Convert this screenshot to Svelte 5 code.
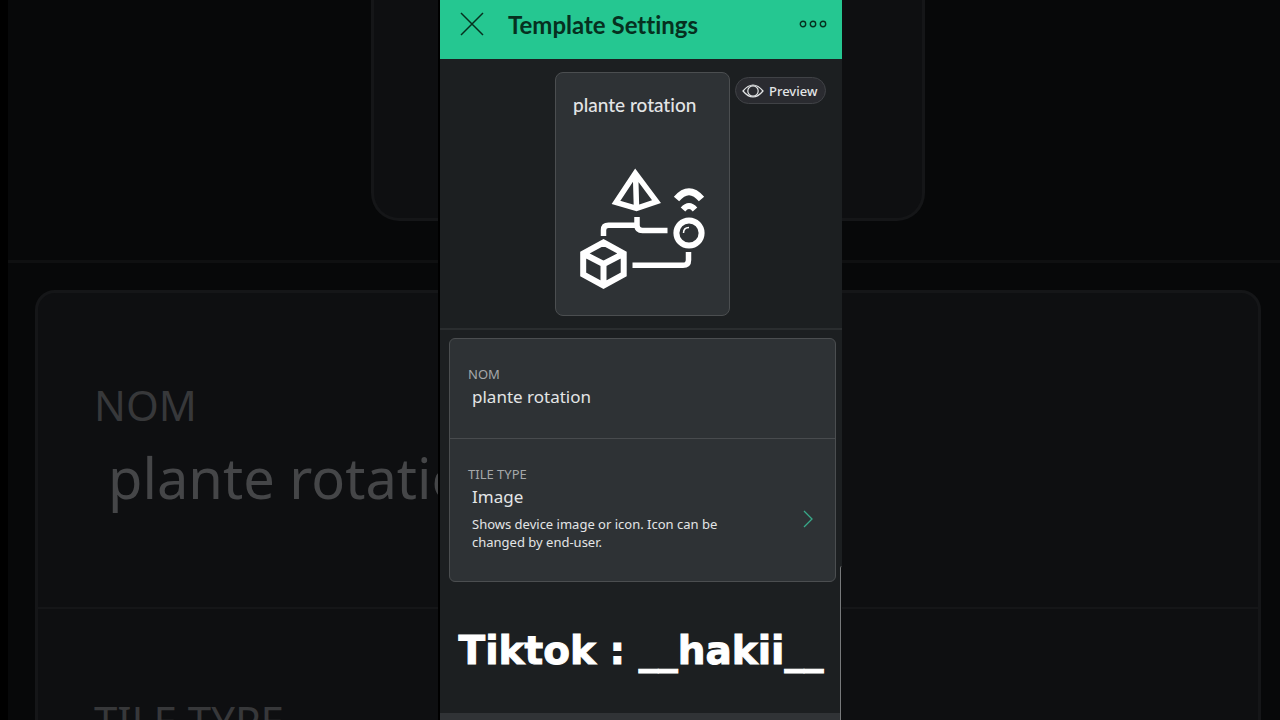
<script>
  let name = "plante rotation";

  const nameLabel = "NOM";
  const tileTypeLabel = "TILE TYPE";
  const tileType = "Image";
  const tileTypeHint =
    "Shows device image or icon. Icon can be changed by end-user.";
  const caption = "Tiktok : __hakii__";
</script>

<style>
  :global(body) {
    background: #000;
  }

  .stage {
    display: grid;
    min-height: 100vh;
    overflow: hidden;
    font-family: "Noto Sans", "Open Sans", sans-serif;
  }

  .backdrop,
  .phone {
    grid-area: 1 / 1;
    box-sizing: border-box;
  }

  /* enlarged, dimmed copy of the settings behind the phone */
  .backdrop {
    height: 100vh;
    overflow: hidden;
    border-left: 8px solid #000;
    background: #070809;
  }

  .backdrop-top {
    display: flex;
    justify-content: center;
    height: 260px;
    padding: 0 19px 0 27px;
    border-bottom: 3px solid #0f1011;
  }

  .backdrop-tile {
    box-sizing: border-box;
    width: 554px;
    height: 221px;
    border: 3px solid #151618;
    border-top: none;
    border-radius: 0 0 28px 28px;
    background: #0e0f11;
  }

  .backdrop-card {
    margin: 27px 19px 0 27px;
    border: 3px solid #151618;
    border-radius: 20px;
    background: #0e0f11;
  }

  .backdrop-row {
    box-sizing: border-box;
    height: 316px;
    padding: 80px 56px 0;
    border-bottom: 2px solid #151618;
  }

  .backdrop-label {
    color: #37383a;
    font-size: 42px;
    line-height: 64px;
  }

  .backdrop-value {
    padding-left: 14px;
    color: #454648;
    font-size: 56px;
    line-height: 80px;
  }

  .phone {
    position: relative;
    justify-self: center;
    display: flex;
    flex-direction: column;
    width: 100%;
    max-width: 404px;
    border-left: 2px solid #000;
    background: #1c1f21;
    color: #e3e5e6;
  }

  button {
    border: none;
    padding: 0;
    background: none;
    color: inherit;
    font: inherit;
    text-align: left;
    cursor: pointer;
  }

  svg {
    display: block;
    fill: none;
  }

  .header {
    display: flex;
    align-items: center;
    box-sizing: border-box;
    height: 59px;
    padding: 0 15px 12px 20px;
    background: #25c791;
    color: #06301f;
  }

  .title {
    flex: 1;
    margin: 2px 0 0 24px;
    font-family: Lato, sans-serif;
    font-size: 24px;
    font-weight: 700;
    font-variant-ligatures: none;
    line-height: 32px;
  }

  .preview-area {
    display: grid;
    grid-template-columns: 1fr 175px 1fr;
    padding: 13px 0 12px 3px;
    border-bottom: 2px solid #2a2d2f;
  }

  .tile {
    grid-column: 2;
    box-sizing: border-box;
    height: 244px;
    padding: 20px 17px;
    border: 1px solid #4b4e50;
    border-radius: 8px;
    background: #2e3235;
  }

  .tile-name {
    font-family: Lato, sans-serif;
    font-size: 19px;
    font-weight: 500;
    font-variant-ligatures: none;
    line-height: 24px;
    white-space: nowrap;
  }

  .tile svg {
    margin: 48px 0 0 4px;
  }

  .preview {
    display: flex;
    align-items: center;
    justify-self: start;
    gap: 5px;
    box-sizing: border-box;
    height: 27px;
    margin: 5px 0 0 5px;
    padding: 0 8px 0 6px;
    border: 1px solid #404246;
    border-radius: 14px;
    background: #2a2b30;
    font-size: 13px;
    font-weight: 500;
  }

  .card {
    margin: 8px 6px 0 9px;
    border: 1px solid #4b4e50;
    border-radius: 6px;
    background: #2e3235;
  }

  .row {
    display: block;
    box-sizing: border-box;
    width: 100%;
    padding: 25px 18px;
  }

  .name-row {
    height: 100px;
    border-bottom: 1px solid #484b4e;
  }

  .type-row {
    display: flex;
    align-items: flex-start;
    justify-content: space-between;
    height: 142px;
    padding-right: 22px;
  }

  .type-row svg {
    margin-top: 46px;
  }

  .label,
  .value,
  .hint {
    display: block;
  }

  .label {
    color: #a5a8aa;
    font-size: 13px;
    line-height: 20px;
  }

  .value {
    box-sizing: border-box;
    width: 100%;
    border: none;
    outline: none;
    padding: 0 0 0 4px;
    background: none;
    color: inherit;
    font-family: inherit;
    font-size: 17px;
    line-height: 26px;
  }

  .hint {
    max-width: 260px;
    padding: 5px 0 0 4px;
    font-size: 13px;
    line-height: 18px;
  }

  .caption {
    flex: 1;
    display: flex;
    align-items: center;
    justify-content: center;
    margin: 0;
    padding-top: 6px;
    color: #fff;
    font-family: "DejaVu Sans", sans-serif;
    font-size: 39px;
    font-weight: 700;
    white-space: nowrap;
    -webkit-text-stroke: 1px #fff;
  }

  .next-card {
    height: 7px;
    background: #303336;
  }

  .edge {
    position: absolute;
    right: 0;
    bottom: 0;
    width: 1px;
    height: 154px;
    border-left: 1px solid #77797b;
    border-top-left-radius: 3px;
    background: #0d0e0f;
  }
</style>

<div class="stage">
  <div class="backdrop" aria-hidden="true">
    <div class="backdrop-top">
      <div class="backdrop-tile"></div>
    </div>
    <div class="backdrop-card">
      <div class="backdrop-row">
        <div class="backdrop-label">{nameLabel}</div>
        <div class="backdrop-value">{name}</div>
      </div>
      <div class="backdrop-row">
        <div class="backdrop-label">{tileTypeLabel}</div>
        <div class="backdrop-value">{tileType}</div>
      </div>
    </div>
  </div>

  <main class="phone">
    <header class="header">
      <button type="button" aria-label="Close">
        <svg width="24" height="24" viewBox="0 0 24 24" stroke="currentColor" stroke-width="1.5">
          <path d="M1 1L23 23M23 1L1 23" />
        </svg>
      </button>
      <h1 class="title">Template Settings</h1>
      <button type="button" aria-label="More">
        <svg width="28" height="8" viewBox="0 0 28 8" stroke="currentColor" stroke-width="1.4">
          <circle cx="4" cy="4" r="2.7" />
          <circle cx="14" cy="4" r="2.7" />
          <circle cx="24" cy="4" r="2.7" />
        </svg>
      </button>
    </header>

    <section class="preview-area">
      <div class="tile">
        <div class="tile-name">{name}</div>
        <svg width="130" height="126" viewBox="0 0 130 126" stroke="#fff">
          <!-- pyramid -->
          <path d="M58.3 8.2L39 37.500L59.500 43.300L79.500 36.500Z M58.5 8L59.5 43" stroke-width="5.500" />
          <!-- cube -->
          <path
            d="M26.500 77.500L46.700 88.500V109.500L26.500 120.500L6.200 109.500V88.500Z M6.200 88.500L26.500 99L46.700 88.500 M26.500 99V120.500"
            stroke-width="6" />
          <!-- connections -->
          <path d="M26.500 71V65Q26.500 60.300 31.500 60.300H60 M60 52V60Q60 65.500 65.500 65.500H90.500" stroke-width="5.500" />
          <path d="M55.500 100.300H106Q111.500 100.300 111.500 95V87" stroke-width="5.500" />
          <!-- sensor -->
          <circle cx="112" cy="68" r="12.600" stroke-width="6" />
          <path d="M106.500 68Q106.500 62.500 112 62.500" stroke-width="1.500" />
          <path d="M99.500 34Q112 19.500 124.500 34" stroke-width="7" />
          <path d="M106 44.500Q112 37.500 118 44.500" stroke-width="6" />
        </svg>
      </div>
      <button class="preview" type="button">
        <svg width="22" height="14" viewBox="0 0 22 14" stroke="currentColor" stroke-width="1.2">
          <path d="M1 7Q11 -5 21 7Q11 19 1 7Z" />
          <circle cx="11" cy="7" r="5.2" />
        </svg>
        Preview
      </button>
    </section>

    <section class="card">
      <div class="row name-row">
        <label class="label" for="name">{nameLabel}</label>
        <input class="value" id="name" type="text" bind:value={name} />
      </div>
      <button class="row type-row" type="button">
        <span>
          <span class="label">{tileTypeLabel}</span>
          <span class="value">{tileType}</span>
          <span class="hint">{tileTypeHint}</span>
        </span>
        <svg width="10" height="18" viewBox="0 0 10 18" stroke="#38a989" stroke-width="1.3">
          <path d="M1 1L9 9L1 17" />
        </svg>
      </button>
    </section>

    <p class="caption">{caption}</p>
    <div class="next-card"></div>
    <div class="edge"></div>
  </main>
</div>
